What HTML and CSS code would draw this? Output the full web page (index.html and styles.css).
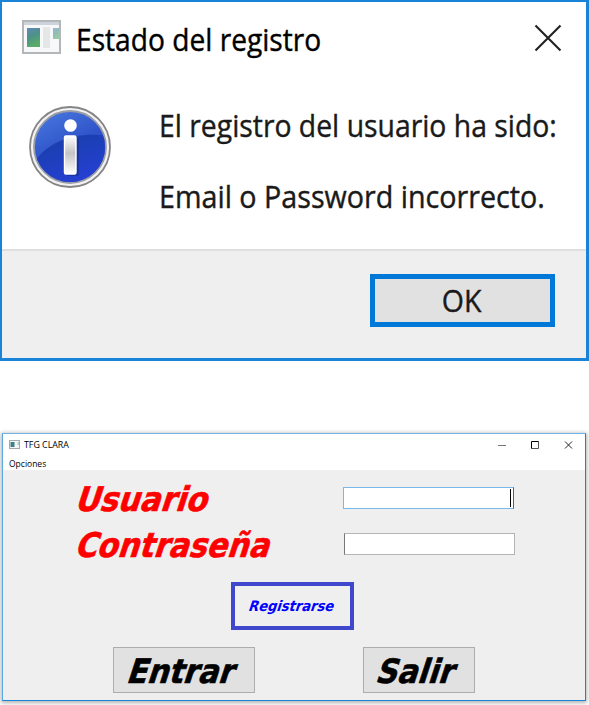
FILE: index.html
```html
<!DOCTYPE html>
<html lang="es">
<head>
<meta charset="utf-8">
<title>TFG CLARA</title>
<link rel="stylesheet" href="styles.css">
</head>
<body>
<section class="dialog">
  <header class="dialog-bar">
    <svg class="dialog-icon" viewBox="0 0 40 35">
      <defs>
        <linearGradient id="pane" x1="0" y1="0" x2="0.35" y2="1"><stop offset="0" stop-color="#6288b5"/><stop offset=".5" stop-color="#4c9288"/><stop offset="1" stop-color="#58ac68"/></linearGradient>
      </defs>
      <rect x="1" y="1" width="37" height="32" fill="#f7f8f9" stroke="#b4b7ba" stroke-width="2"/>
      <rect x="2" y="2" width="35" height="3" fill="#ccd3da"/>
      <rect x="5" y="8" width="13" height="19" fill="url(#pane)"/>
      <rect x="21" y="7" width="7" height="21" fill="#e5e6e6"/>
      <rect x="31" y="8" width="6" height="11" fill="url(#pane)" opacity=".6"/>
    </svg>
    <span class="text title">Estado del registro</span>
    <svg class="dialog-close" viewBox="0 0 28 28"><path d="M1.5 1.5 26.5 26.5M26.5 1.5 1.5 26.5" stroke="#222" stroke-width="2.1"/></svg>
  </header>
  <div class="dialog-body">
    <svg class="info" viewBox="0 0 84 84">
      <defs>
        <linearGradient id="disc" x1="0" y1="0" x2=".5" y2="1"><stop offset="0" stop-color="#4a7be0"/><stop offset="1" stop-color="#1c37b8"/></linearGradient>
        <linearGradient id="deep" x1="0" y1="0" x2=".5" y2="1"><stop offset="0" stop-color="#183ea4"/><stop offset="1" stop-color="#2440d4"/></linearGradient>
        <linearGradient id="stem" x1="0" y1="0" x2="0" y2="1"><stop offset="0" stop-color="#fff"/><stop offset=".45" stop-color="#c4c4c6"/><stop offset="1" stop-color="#fff"/></linearGradient>
        <clipPath id="round"><circle cx="42" cy="42" r="35"/></clipPath>
      </defs>
      <circle cx="42" cy="42" r="40" fill="#f2f2f2" stroke="#858585" stroke-width="1.8"/>
      <circle cx="42" cy="42" r="36" fill="url(#disc)" stroke="#999ba6" stroke-width="1.8"/>
      <path clip-path="url(#round)" d="M5 59C18 38 45 26 80 31V80H5Z" fill="url(#deep)"/>
      <rect x="38" y="33" width="13" height="38" rx="2" fill="#132c90" opacity=".6"/>
      <circle cx="42.5" cy="20.5" r="6.3" fill="#fff"/>
      <rect x="36.5" y="31" width="11.5" height="38" rx="1.5" fill="url(#stem)" stroke="#fff" stroke-width="1.4"/>
    </svg>
    <div class="message">
      <p><span class="text line-a">El registro del usuario ha sido:</span></p>
      <p><span class="text line-b">Email o Password incorrecto.</span></p>
    </div>
  </div>
  <footer class="dialog-footer"><button class="ok"><span class="text">OK</span></button></footer>
</section>

<section class="window">
  <header class="window-bar">
    <svg class="window-icon" viewBox="0 0 11 9"><rect x=".5" y=".5" width="10" height="8" fill="#f4f5f6" stroke="#a4a9ae"/><rect x="1.5" y="2" width="4" height="5" fill="#3e8087"/><rect x="8.5" y="2" width="1.5" height="3" fill="#a5cfbd"/></svg>
    <span class="text app-name">TFG CLARA</span>
    <svg class="controls" viewBox="0 0 76 10"><path d="M0 5.5H8" stroke="#777"/><path d="M33.5 9V1.5H40" fill="none" stroke="#000"/><path d="M40.5 1V8.5H33" fill="none" stroke="#555"/><path d="M67 1.5 74 8.5M74 1.5 67 8.5" stroke="#222"/></svg>
  </header>
  <nav class="menu"><span class="text">Opciones</span></nav>
  <main class="form">
    <div class="row">
      <label class="label"><span class="text slant usuario">Usuario</span></label>
      <div class="field focused"><i class="caret"></i></div>
    </div>
    <div class="row second">
      <label class="label"><span class="text slant contra">Contraseña</span></label>
      <div class="field"></div>
    </div>
    <button class="register"><span class="text slant">Registrarse</span></button>
    <div class="actions">
      <button class="action enter"><span class="text slant">Entrar</span></button>
      <button class="action exit"><span class="text slant">Salir</span></button>
    </div>
  </main>
</section>
</body>
</html>
```

FILE: styles.css
```css
* { box-sizing: border-box; }
body { margin: 0; height: 705px; overflow: hidden; background: #fff; font-family: "Open Sans", "Noto Sans", sans-serif; color: #1a1a1a; }
p { margin: 0; }
svg { display: block; flex: none; }
button { font: inherit; padding: 0; border-radius: 0; color: inherit; }
.text { display: inline-block; white-space: nowrap; transform-origin: left center; }

.dialog { width: 589px; height: 361px; border: solid #1883d7; border-width: 2px 3px 3px 2px; display: flex; flex-direction: column; -webkit-text-stroke: .4px currentColor; }
.dialog-bar { height: 76px; display: flex; align-items: flex-start; padding: 18px 24px 0 20px; }
.dialog-icon { width: 40px; height: 35px; }
.title { margin: -1px 0 0 14px; font-size: 31px; line-height: 40px; color: #000; transform: scaleX(.908); }
.dialog-close { width: 28px; height: 28px; margin: 4px 0 0 auto; }
.dialog-body { flex: 1; display: flex; padding: 27px 0 0 26px; }
.info { width: 84px; height: 84px; }
.message { margin: -15px 0 0 47px; font-size: 31px; line-height: 71px; }
.message p { height: 71px; }
.line-a { transform: scaleX(.914); }
.line-b { transform: scaleX(.925); }
.dialog-footer { height: 109px; border-top: 2px solid #dfdfdf; background: #efefef; display: flex; justify-content: flex-end; padding: 23px 31px 0 0; }
.ok { width: 185px; height: 53px; border: 5px solid #0078d7; background: #e1e1e1; font-size: 31px; line-height: 43px; }
.ok .text { transform: translateX(-1px) scaleX(.92); transform-origin: center; }

.window { width: 584px; height: 268px; margin: 72px 0 0 2px; border: 1px solid #1883d7; border-top-color: #72b5e8; border-left-color: #5da8df; background: #efefef; box-shadow: 0 1px 4px 1px rgba(0,0,0,.3); }
.window-bar { height: 22px; background: #fff; display: flex; align-items: center; padding: 0 11px 1px 6px; }
.window-icon { width: 11px; height: 9px; }
.app-name { margin-left: 4px; font-size: 9px; line-height: 12px; color: #000; transform: scaleX(.98); }
.controls { width: 76px; height: 10px; margin-left: auto; }
.menu { height: 14px; background: #fff; padding-left: 6px; font-size: 8.5px; line-height: 15px; color: #000; }
.form { padding-top: 17px; }
.row { display: flex; height: 23px; padding-left: 72px; }
.row.second { margin-top: 23px; }
.label { width: 268px; height: 23px; font: bold 34px/24px "DejaVu Sans Condensed", "DejaVu Sans", sans-serif; color: #f00; -webkit-text-stroke: .6px currentColor; }
.slant { font-family: "DejaVu Sans Condensed", "DejaVu Sans", sans-serif; font-weight: bold; transform: skewX(-18deg); transform-origin: left bottom; }
.label .slant { margin-left: -1px; }
.label .contra { transform: skewX(-18deg) scaleX(.985); }
.field { width: 171px; height: 22px; border: 1px solid #b4b4b4; border-left-color: #777; background: #fff; }
.second .field { margin-left: 1px; }
.field.focused { border-color: #7ab8ea; border-right-color: #0078d7; display: flex; justify-content: flex-end; padding: 1px 2px; }
.caret { width: 1px; height: 18px; background: #000; }
.register { display: block; width: 123px; height: 48px; margin: 26px 0 0 228px; border: 4px solid #3f48cc; background: transparent; color: #00f; font-size: 14.5px; line-height: 40px; }
.register .slant { margin-left: -15px; }
.actions { display: flex; gap: 108px; margin: 17px 0 0 110px; }
.action { height: 46px; border: 1px solid #adadad; background: #e1e1e1; color: #000; font-size: 33.5px; line-height: 44px; -webkit-text-stroke: .6px currentColor; }
.action .slant { margin-left: -18px; }
.enter { width: 142px; }
.exit { width: 112px; }
```
